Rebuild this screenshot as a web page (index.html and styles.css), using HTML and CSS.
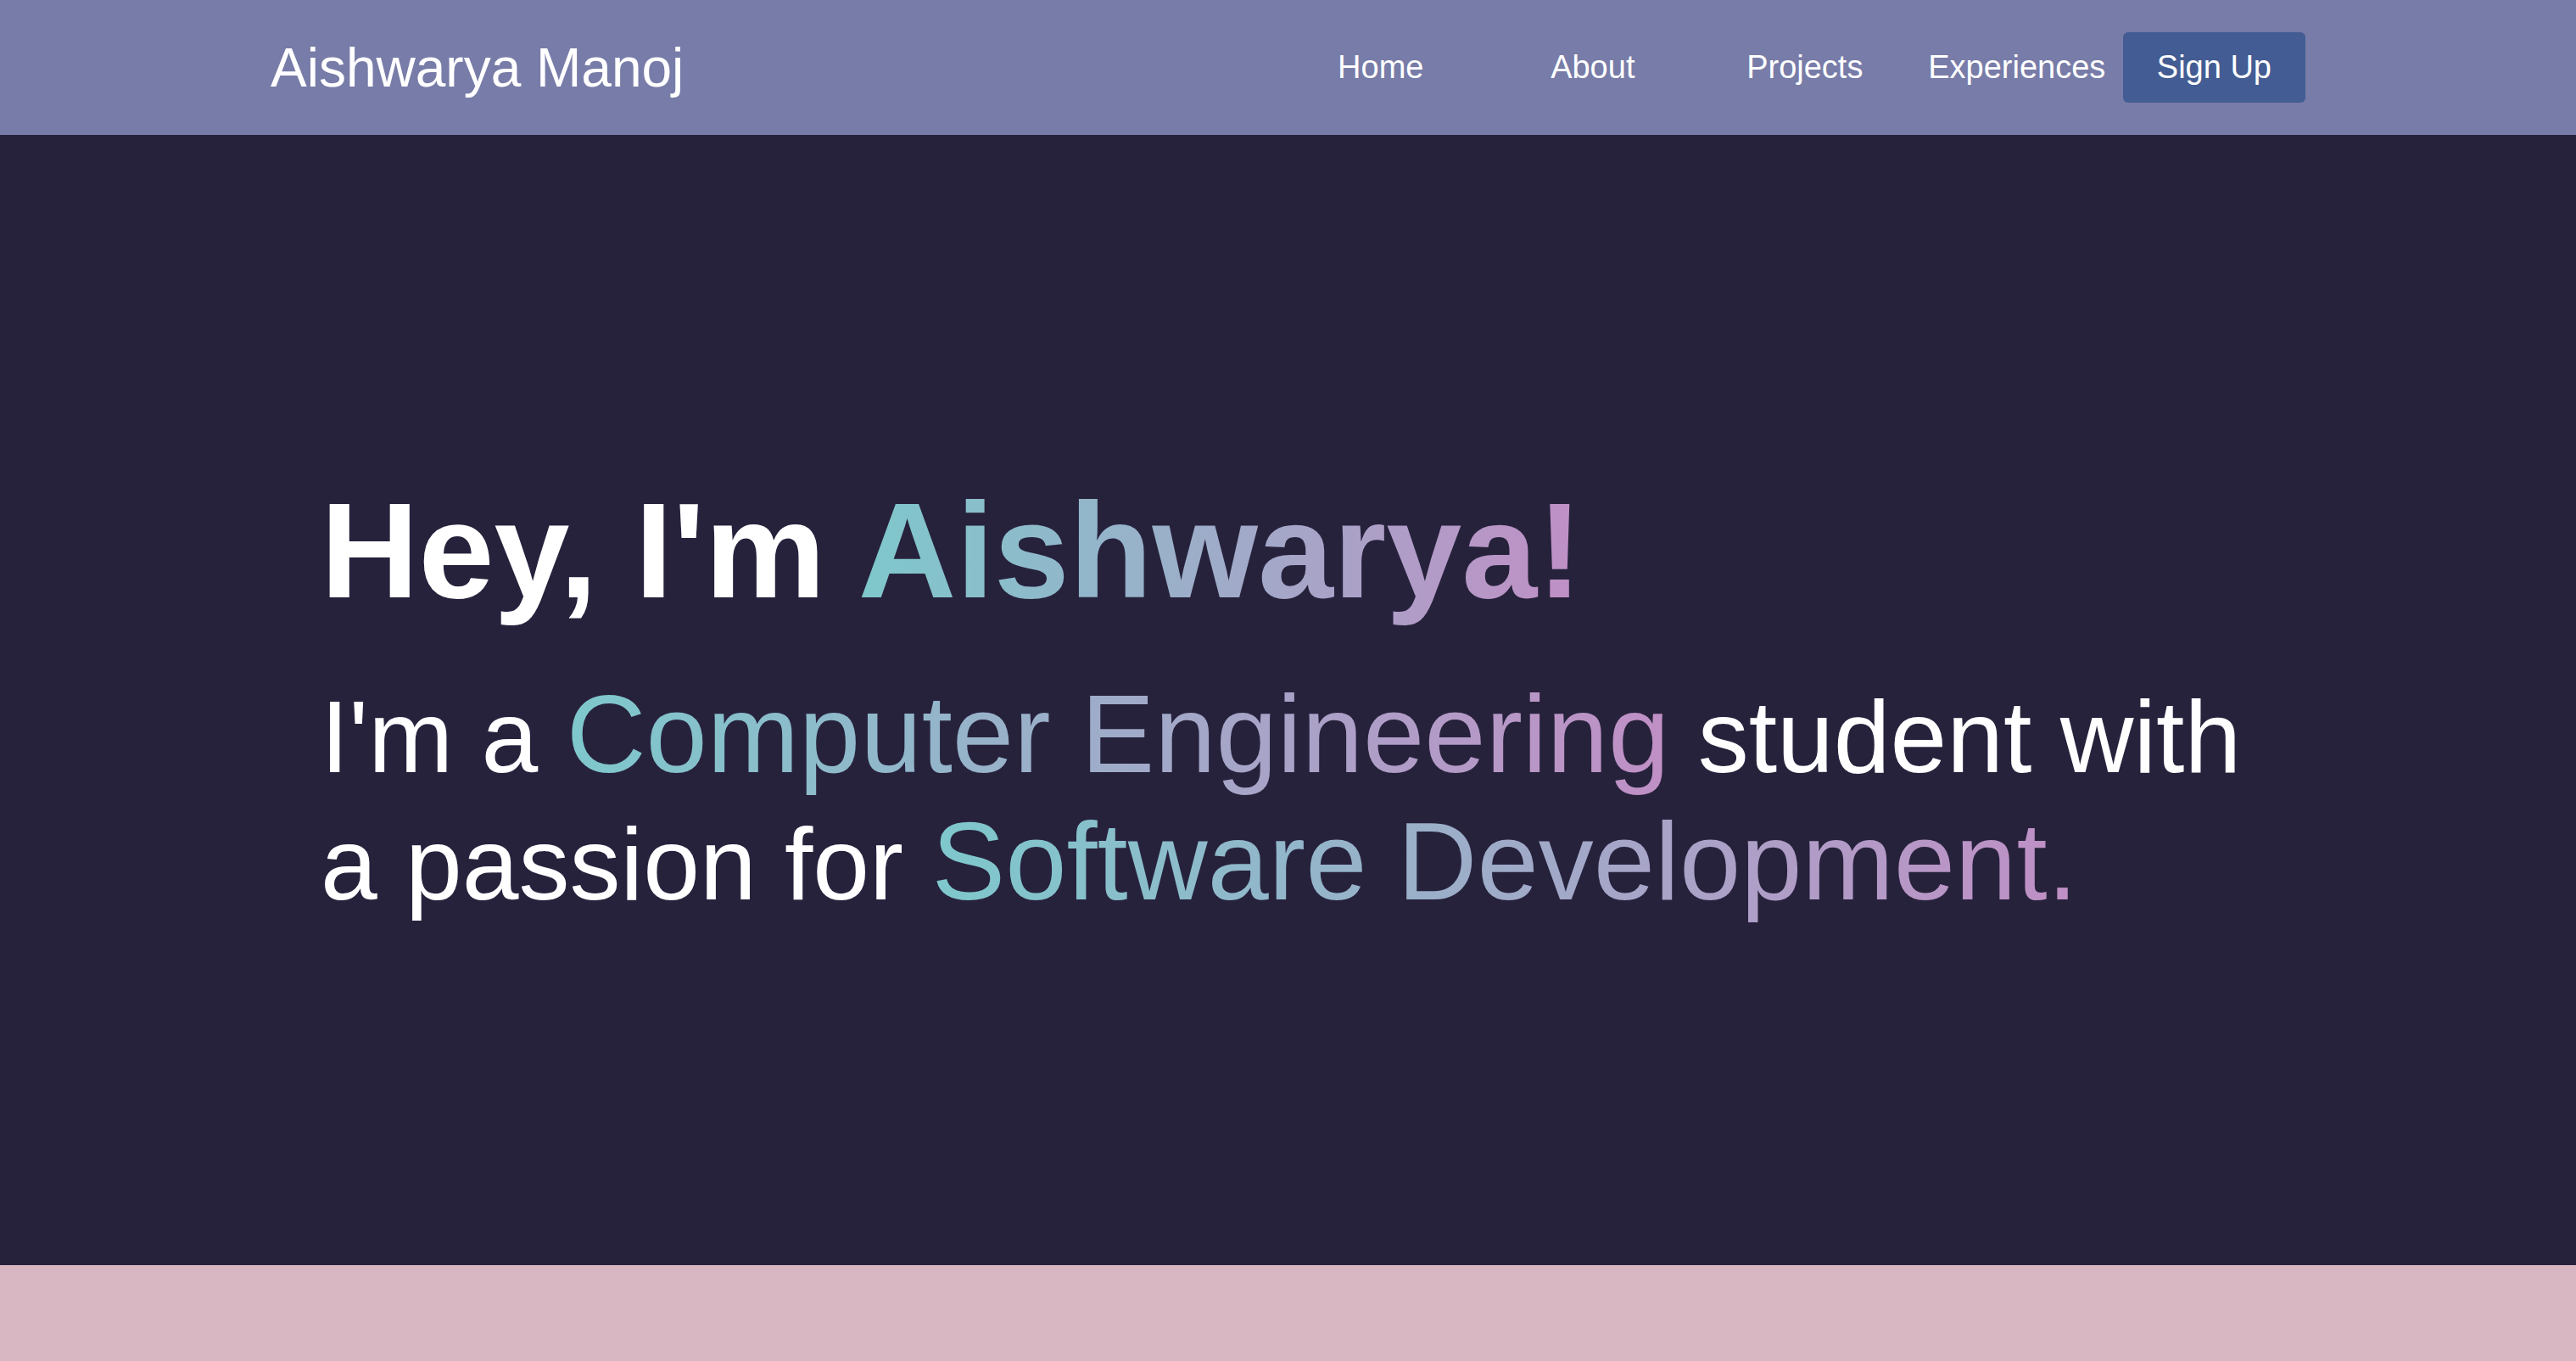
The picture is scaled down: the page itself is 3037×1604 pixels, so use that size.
FILE: index.html
```html
<!DOCTYPE html>
<html lang="en">
<head>
<meta charset="utf-8">
<title>Aishwarya Manoj</title>
<link rel="stylesheet" href="styles.css">
</head>
<body>
<header class="navbar">
  <a class="logo" href="#">Aishwarya Manoj</a>
  <nav class="nav">
    <a class="nav-link" href="#">Home</a>
    <a class="nav-link" href="#">About</a>
    <a class="nav-link" href="#">Projects</a>
    <a class="nav-link" href="#">Experiences</a>
    <a class="signup" href="#">Sign Up</a>
  </nav>
</header>
<section class="hero">
  <h1 class="hero-title">Hey, I'm <span class="grad">Aishwarya!</span></h1>
  <p class="hero-sub">I'm a <span class="grad grad-sub">Computer Engineering</span> student with a passion for <span class="grad grad-sub">Software Development.</span></p>
</section>
<section class="next"></section>
</body>
</html>
```

FILE: styles.css
```css
html, body {
  margin: 0;
  padding: 0;
}
body {
  font-family: "Liberation Sans", Arial, sans-serif;
  background: #d9b7c2;
  color: #ffffff;
}
a {
  color: inherit;
  text-decoration: none;
}
.navbar {
  height: 159px;
  background: #787ca8;
  display: flex;
  align-items: center;
  justify-content: space-between;
  padding: 0 319px;
  box-sizing: border-box;
}
.logo {
  font-size: 64px;
  line-height: 74px;
  color: #ffffff;
}
.nav {
  display: flex;
  align-items: center;
}
.nav-link {
  width: 250px;
  text-align: center;
  font-size: 38px;
  color: #ffffff;
}
.signup {
  font-size: 38px;
  padding: 20px 40px;
  background: #435c93;
  border-radius: 6px;
  color: #ffffff;
}
.hero {
  height: 1332px;
  box-sizing: border-box;
  background: #27223c;
  padding: 0 378px;
  display: flex;
  flex-direction: column;
  justify-content: center;
}
.hero-title {
  margin: 0;
  font-size: 160px;
  line-height: 184px;
  font-weight: 700;
}
.hero-sub {
  margin: 52px 0 0 0;
  font-size: 120px;
  line-height: 150px;
  font-weight: 400;
}
.grad {
  background: linear-gradient(to right, #7ec8cc, #c08fc5);
  -webkit-background-clip: text;
  background-clip: text;
  color: transparent;
}
.grad-sub {
  font-size: 130px;
  line-height: 1;
}
.next {
  height: 700px;
  background: #d9b7c2;
}
```
